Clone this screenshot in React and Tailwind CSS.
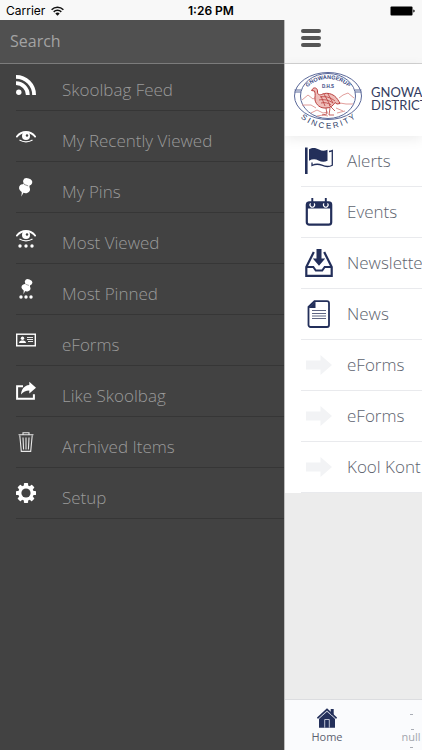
import React from 'react';

const RssIcon = () => (
  <svg width="20" height="20" viewBox="0 0 20 20" fill="none" stroke="#fff" strokeWidth="3.8">
    <circle cx="2.8" cy="17.2" r="2.7" fill="#fff" stroke="none" />
    <path d="M0 8.2A11.8 11.8 0 0 1 11.8 20" />
    <path d="M0 1.9A18.1 18.1 0 0 1 18.1 20" />
  </svg>
);

// Shared eye shape, drawn in a 20x12 box
const EyeShape = () => (
  <g>
    <path d="M0.3 6.2C3.2 2.4 6.6 1 10 1s6.800 1.400 9.700 5.200" fill="none" stroke="#fff" strokeWidth="1.800" />
    <path d="M3.500 9c3.800 2.300 9.200 2.300 13 0" fill="none" stroke="#fff" strokeWidth="1.300" />
    <circle cx="10" cy="5" r="4" fill="#fff" />
    <circle cx="11" cy="4.500" r="1.200" fill="#424242" />
  </g>
);

const PinShape = () => (
  <g fill="#fff">
    <ellipse cx="12.300" cy="4" rx="4.900" ry="3.600" transform="rotate(18 12.300 4)" />
    <path d="M8 5.500l6.500 2-1 4-7-2z" />
    <ellipse cx="9" cy="11.200" rx="6" ry="4.500" transform="rotate(22 9 11.200)" />
    <path d="M6.200 13l2.600.8-3.100 5.700z" />
    <path d="M8.400 6.700l4.400 1.600" stroke="#424242" strokeWidth="0.600" />
  </g>
);

const EyeIcon = () => (
  <svg width="20" height="20" viewBox="0 0 20 20">
    <g transform="translate(0 5)"><EyeShape /></g>
  </svg>
);

const PinIcon = () => (
  <svg width="20" height="20" viewBox="0 0 20 20">
    <g transform="translate(0 1) scale(.95)"><PinShape /></g>
  </svg>
);

const Dots = ({ gap }) => (
  <g fill="#fff">
    <circle cx={10 - gap} cy="18" r="1.700" />
    <circle cx="10" cy="18" r="1.700" />
    <circle cx={10 + gap} cy="18" r="1.700" />
  </g>
);

const EyeDotsIcon = () => (
  <svg width="20" height="20" viewBox="0 0 20 20">
    <g transform="translate(0 2)"><EyeShape /></g>
    <Dots gap={6} />
  </svg>
);

const PinDotsIcon = () => (
  <svg width="20" height="20" viewBox="0 0 20 20">
    <g transform="translate(3 0) scale(.78)"><PinShape /></g>
    <Dots gap={5} />
  </svg>
);

const CardIcon = () => (
  <svg width="20" height="20" viewBox="0 0 20 20">
    <rect x="0.700" y="4.200" width="18.600" height="11.600" fill="none" stroke="#fff" strokeWidth="1.400" />
    <circle cx="6.500" cy="8.300" r="1.700" fill="#fff" />
    <path d="M3 13c0-2.200 2-2.500 3.500-2.500s3.500.3 3.500 2.500z" fill="#fff" />
    <path d="M11 7.500h6M11 9.500h6M12 11.500h5" stroke="#fff" strokeWidth="0.900" />
  </svg>
);

const ShareIcon = () => (
  <svg width="20" height="20" viewBox="0 0 20 20">
    <path d="M7 5.200H1.100v12.500h16.800v-4.500" fill="none" stroke="#fff" strokeWidth="2" />
    <path d="M13.300.8L20 6.700l-6.700 5.800V9.600C9.800 9.600 7.300 10.800 5 13.600 5.300 8.300 8 4.400 13.300 3.900z" fill="#fff" />
  </svg>
);

const TrashIcon = () => (
  <svg width="20" height="20" viewBox="0 0 20 20" fill="none" stroke="#e8e8e8" strokeWidth="1.100">
    <path d="M2.500 2.800h15M7 2.500V.700h6v1.800M3.800 3.500l1.500 15.900h9.400l1.500-15.900" />
    <path d="M7 5.500l.6 12M10 5.500v12M13 5.500l-.6 12" />
  </svg>
);

const GearIcon = () => (
  <svg width="20" height="20" viewBox="0 0 20 20">
    <g fill="#fff">
      {[0, 45, 90, 135].map((a) => (
        <rect key={a} x="7.900" y="0" width="4.200" height="20" rx="0.700" transform={`rotate(${a} 10 10)`} />
      ))}
      <circle cx="10" cy="10" r="7.800" />
    </g>
    <circle cx="10" cy="10" r="4.600" fill="#424242" />
  </svg>
);

const FlagIcon = () => (
  <svg width="28" height="28" viewBox="0 0 28 28">
    <path d="M0 .5h2.600V27H0z" fill="#232f5a" />
    <path d="M4 2.200C8 .2 11 1 14 2.500s5 1.500 8.500.3v11c-3 1.300-6 1.200-9-.3s-6-1.600-9.500.2z" fill="#232f5a" />
    <path d="M24 4.500c1.200 0 2.300-.4 3.300-.9v14.600c-3.500 2-7 1.500-10.500 0s-6.300-1.400-9.800.3V15.500" fill="none" stroke="#232f5a" strokeWidth="1.300" />
  </svg>
);

const CalendarIcon = () => (
  <svg width="28" height="28" viewBox="0 0 28 28">
    <rect x="1.800" y="4.300" width="24.400" height="22.400" rx="2.500" fill="none" stroke="#232f5a" strokeWidth="2.200" />
    <path d="M1.500 4.500h25V10.500h-25z" fill="#232f5a" />
    <path d="M5.600 5.300a2.300 2.300 0 1 0 3.400 0M19.100 5.300a2.300 2.300 0 1 0 3.400 0" fill="none" stroke="#fff" strokeWidth="1.100" />
    <path d="M7.300 0v6.500M20.800 0v6.500" stroke="#232f5a" strokeWidth="1.900" />
  </svg>
);

const InboxIcon = () => (
  <svg width="28" height="28" viewBox="0 0 28 28">
    <path d="M8.800 3L1.300 18v8.800h25.400V18L19.200 3" fill="none" stroke="#232f5a" strokeWidth="2.200" />
    <path d="M1.500 18h6.800l2.500 3.500h6.400l2.500-3.500h6.800" fill="none" stroke="#232f5a" strokeWidth="2" />
    <path d="M11.500 0h5v9.500h3.700L14 16.800 7.800 9.500h3.700z" fill="#232f5a" />
  </svg>
);

const NewsIcon = () => (
  <svg width="28" height="28" viewBox="0 0 28 28">
    <path d="M9.500 1.200H22a2 2 0 0 1 2 2V25a2 2 0 0 1-2 2H5.500a2 2 0 0 1-2-2V7z" fill="none" stroke="#232f5a" strokeWidth="1.800" />
    <path d="M10.500 1v7H3.500z" fill="#232f5a" />
    <path d="M7 10.500h14M7 13.500h14M7 16h14M7 18.500h14" stroke="#4d5575" strokeWidth="0.900" />
  </svg>
);

const ArrowIcon = () => (
  <svg width="28" height="28" viewBox="0 0 28 28">
    <path d="M1 9.500h14.500V4L27 14 15.500 24v-5.500H1z" fill="#f2f3f5" />
  </svg>
);

const HomeIcon = () => (
  <svg width="20" height="20" viewBox="0 0 20 20">
    <path d="M13.700 1h3v6h-3zM2 10l8-7 8 7v9.700H2z" fill="#232f5a" />
    <path d="M.4 10.300L10 1.400l9.600 8.900" fill="none" stroke="#232f5a" strokeWidth="1.700" />
    <path d="M1.500 11L10 3.300l8.500 7.700M7.700 19.700v-8.200h4.600v8.200" fill="none" stroke="#e4e7f0" strokeWidth="0.800" />
  </svg>
);

const WifiIcon = () => (
  <svg width="13" height="10" viewBox="0 0 13 10" fill="none" stroke="#111" strokeWidth="1.500">
    <path d="M.6 3.700a8.400 8.400 0 0 1 11.800 0M2.700 5.900a5.400 5.400 0 0 1 7.600 0" />
    <path d="M6.500 9.700L4.300 7.500a3.100 3.100 0 0 1 4.400 0z" fill="#111" stroke="none" />
  </svg>
);

const BatteryIcon = () => (
  <svg width="26" height="10" viewBox="0 0 26 10">
    <rect x="0.500" y="0.500" width="22" height="9" rx="1" />
    <path d="M23.300 3.500q1.400.1 1.400 1.500t-1.400 1.500z" />
  </svg>
);

const SchoolCrest = () => (
  <svg width="70" height="60" viewBox="0 0 70 60" role="img" aria-label="Gnowangerup D.H.S. Sincerity">
    <defs>
      <path id="crest-top" d="M14 16C24 4 46 4 56 16" />
      <path id="crest-bottom" d="M5 44Q35 69 65 44" />
    </defs>
    <g fill="none" stroke="#5a6899" strokeWidth="1">
      <ellipse cx="35" cy="24" rx="33.500" ry="23.500" />
      <ellipse cx="35" cy="24" rx="27.500" ry="22.500" />
      <path d="M1.500 18h6.500M1.500 20h6.500M62 18h6.500M62 20h6.500" />
    </g>
    <g fill="none" stroke="#d98480" strokeWidth="0.800">
      <path d="M9 28l6-5 5 4 3-2M46 26l4-3 5-2 6 5M9 33h9l5 3M47 31l6 1 7 0M18 41l6-3 6 3 5-1M43 36l7 3M44 41l8-2M24 44l6-1 5 1" />
    </g>
    <path d="M18.500 18.500l1.500-2c2-1.500 4.500 0 4.500 2.500-.2 3 1 4.500 4 3.500 4-2 9-1.500 13 1.500 2.500 2 4 4.500 5.500 7.500l-3 .5-2-1.500c-2 3.500-5 5.500-9 5.500-5.500.5-10-3-11-8-.3-3 .8-6-.5-9z" fill="#efbdb9" stroke="#b93f3e" strokeWidth="1" />
    <path d="M27 25c5-1 10 0 15 4M26 28c5-1 10 0 14 3M28 31c4-1 7 0 10 2M31 22l6 11M35 22l5 9M28 24l4 10M33 36l1 6-5 1M37 36l-1 7 5 0M36 33l6 6" fill="none" stroke="#b93f3e" strokeWidth="0.800" />
    <g fill="#35467f" fontFamily="Liberation Sans, sans-serif" fontWeight="700">
      <text fontSize="5.500"><textPath href="#crest-top" startOffset="50%" textAnchor="middle">GNOWANGERUP</textPath></text>
      <text x="35" y="16" fontSize="4.500" textAnchor="middle">D.H.S</text>
    </g>
    <g fill="#2d3a66" fontFamily="Liberation Sans, sans-serif">
      <text fontSize="8">
        <textPath href="#crest-bottom" startOffset="50%" textAnchor="middle">S I N C E R I T Y</textPath>
      </text>
    </g>
  </svg>
);

const menuItems = [
  { label: 'Skoolbag Feed', icon: <RssIcon /> },
  { label: 'My Recently Viewed', icon: <EyeIcon /> },
  { label: 'My Pins', icon: <PinIcon /> },
  { label: 'Most Viewed', icon: <EyeDotsIcon /> },
  { label: 'Most Pinned', icon: <PinDotsIcon /> },
  { label: 'eForms', icon: <CardIcon /> },
  { label: 'Like Skoolbag', icon: <ShareIcon /> },
  { label: 'Archived Items', icon: <TrashIcon /> },
  { label: 'Setup', icon: <GearIcon /> },
];

const schoolItems = [
  { label: 'Alerts', icon: <FlagIcon /> },
  { label: 'Events', icon: <CalendarIcon /> },
  { label: 'Newslette', icon: <InboxIcon /> },
  { label: 'News', icon: <NewsIcon /> },
  { label: 'eForms', icon: <ArrowIcon /> },
  { label: 'eForms', icon: <ArrowIcon /> },
  { label: 'Kool Kont', icon: <ArrowIcon /> },
];

const StatusBar = () => (
  <div className="grid h-5 grid-cols-3 items-center bg-[#f8f8f8] px-1.5 pt-0.5 font-[Inter,sans-serif] text-xs text-black">
    <div className="flex items-center gap-1.5">
      <span>Carrier</span>
      <WifiIcon />
    </div>
    <span className="text-center font-semibold">1:26 PM</span>
    <div className="flex justify-end"><BatteryIcon /></div>
  </div>
);

const SideMenu = () => (
  <aside className="w-[284px] shrink-0 bg-[#424242]">
    <div className="h-11 border-b border-[#7c7c7c] bg-[#505050]">
      <input
        type="search"
        aria-label="Search"
        placeholder="Search"
        className="h-full w-full bg-transparent px-2.5 pb-0.5 text-base text-white outline-none placeholder:text-[#a3a3a3]"
      />
    </div>
    <ul className="pl-4">
      {menuItems.map((item) => (
        <li key={item.label} className="flex h-[51px] items-end border-b border-[#363636] first:h-[47px]">
          <button type="button" className="flex w-full items-end gap-[26px] text-left">
            <span className="pb-[15px]">{item.icon}</span>
            <span className="pb-2 text-[17px] leading-6 font-light text-[#9a9a9a]">{item.label}</span>
          </button>
        </li>
      ))}
    </ul>
  </aside>
);

const TabBar = () => (
  <nav className="flex h-[51px] shrink-0 border-t border-[#dcdde0] bg-[#fafbfd] text-[11px] text-[#5c6270]">
    <button type="button" className="flex w-[84px] shrink-0 flex-col items-center gap-px pt-2">
      <HomeIcon />
      <span className="leading-4">Home</span>
    </button>
    <button type="button" className="flex w-[84px] shrink-0 flex-col items-center justify-between pt-3.5 pb-0.5 text-[#a3a6ad]">
      <span className="h-px w-[3px] bg-[#a9adb5]" />
      <span className="relative mt-3 leading-4">
        null
        <span className="absolute top-0 left-1/2 h-px w-[3px] bg-[#a9adb5]" />
      </span>
      <span className="h-px w-[3px] bg-[#a9adb5]" />
    </button>
  </nav>
);

const SchoolPanel = () => (
  <main className="flex min-w-0 flex-1 flex-col overflow-hidden border-l border-[#bdbdbd] bg-[#ececec] whitespace-nowrap">
    <header className="flex h-11 shrink-0 items-center border-b border-[#d2d2d2] bg-[#f8f8f8] px-4 pb-2">
      <button type="button" aria-label="Menu" className="flex w-5 flex-col gap-[3px]">
        <span className="h-1 rounded-full bg-[#555]" />
        <span className="h-1 rounded-full bg-[#555]" />
        <span className="h-1 rounded-full bg-[#555]" />
      </button>
    </header>
    <div className="z-10 flex h-[72px] shrink-0 items-center gap-2 bg-white pl-2 shadow-[0_3px_12px_rgba(0,0,0,0.08)]">
      <div className="shrink-0 pt-1"><SchoolCrest /></div>
      <h1 className="pb-0.5 font-[Lato,sans-serif] text-[13px] leading-[13px] font-normal text-[#343c60]">
        GNOWA
        <br />
        DISTRICT
      </h1>
    </div>
    <ul className="bg-white pl-4">
      {schoolItems.map((item, i) => (
        <li key={i} className="h-[51px] border-b border-[#e9eaed]">
          <button type="button" className="flex h-full w-full items-center gap-3.5 pl-1 text-left">
            <span className="shrink-0">{item.icon}</span>
            <span className="text-[17px] leading-6 font-light text-[#5d636e]">{item.label}</span>
          </button>
        </li>
      ))}
    </ul>
    <div className="flex-1" />
    <TabBar />
  </main>
);

export default function App() {
  return (
    <div className="flex min-h-screen flex-col font-['Open_Sans',sans-serif]">
      <StatusBar />
      <div className="flex flex-1">
        <SideMenu />
        <SchoolPanel />
      </div>
    </div>
  );
}
